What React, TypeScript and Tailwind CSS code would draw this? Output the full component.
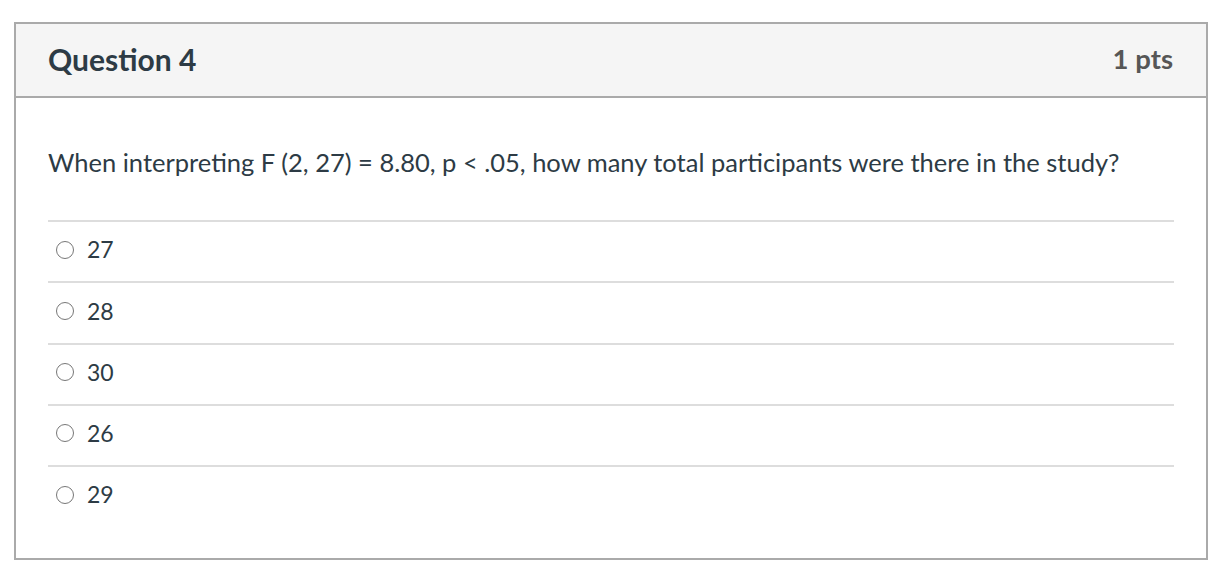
const answers = ["27", "28", "30", "26", "29"];

export default function App() {
  return (
    <div className="min-h-screen bg-white pt-[22px] pl-[14px]" style={{ fontFamily: "Lato, 'Open Sans', sans-serif" }}>
      <div className="w-[1194px] h-[538px] border-2 border-[#aaaaaa] bg-white">
        {/* Header */}
        <div className="h-[74px] bg-[#f5f5f5] border-b-2 border-[#aaaaaa] px-[32px] pb-[3px] flex items-center justify-between">
          <h2 className="text-[30px] font-bold text-[#2d3b45] leading-none">Question 4</h2>
          <span className="text-[27.5px] font-bold text-[#565656] leading-none mr-[1px]">1 pts</span>
        </div>

        {/* Body */}
        <div className="px-[32px]">
          <p className="pt-[48px] pb-[42px] text-[25.5px] leading-[32px] text-[#2d3b45]">
            When interpreting F (2, 27) = 8.80, p &lt; .05, how many total participants were there in the study?
          </p>
          {answers.map((a) => (
            <label key={a} className="flex items-center h-[61.25px] pb-[4px] border-t-2 border-[#dddddd]">
              <span className="ml-[8px] w-[18px] h-[18px] rounded-full border border-[#777777] bg-white" />
              <span className="ml-[13px] text-[23px] text-[#2d3b45]">{a}</span>
            </label>
          ))}
        </div>
      </div>
    </div>
  );
}
